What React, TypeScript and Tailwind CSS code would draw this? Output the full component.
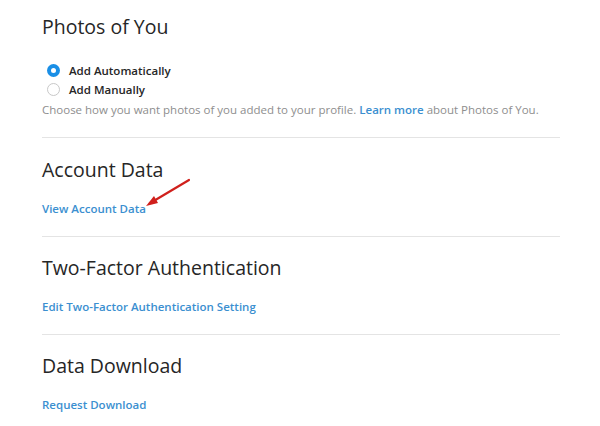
const font = { fontFamily: '"Open Sans", "Noto Sans", sans-serif' };

const sections = [
  { title: 'Account Data', link: 'View Account Data', arrow: true },
  { title: 'Two-Factor Authentication', link: 'Edit Two-Factor Authentication Setting' },
  { title: 'Data Download', link: 'Request Download' },
];

function Radio({ checked, label }: { checked?: boolean; label: string }) {
  return (
    <label className="flex items-center h-[19px] gap-[9px]">
      <span
        className={
          checked
            ? 'w-[13px] h-[13px] rounded-full bg-[#1a8fe6] flex items-center justify-center'
            : 'w-[13px] h-[13px] rounded-full border border-[#c8c8c8] bg-white'
        }
      >
        {checked && <span className="w-[5px] h-[5px] rounded-full bg-white" />}
      </span>
      <span className="text-[11.5px] font-semibold text-[#262626]">{label}</span>
    </label>
  );
}

export default function App() {
  return (
    <div className="w-[600px] h-[426px] bg-white overflow-hidden" style={font}>
      <div className="ml-[42px] w-[518px] pt-[14px]">
        <h2 className="text-[19.5px] leading-[26px] text-[#262626]">Photos of You</h2>
        <div className="mt-[21px] ml-[5px]">
          <Radio checked label="Add Automatically" />
          <Radio label="Add Manually" />
        </div>
        <p className="mt-[2px] text-[11.5px] leading-[18px] text-[#8e8e8e] whitespace-nowrap">
          Choose how you want photos of you added to your profile.{' '}
          <span className="font-semibold text-[#3b8fd0]">Learn more</span> about Photos of You.
        </p>

        {sections.map((s, i) => (
          <div
            key={s.title}
            className={i === 0 ? 'border-t border-[#e4e4e4] mt-[18px] pt-[19px]' : 'border-t border-[#e4e4e4] mt-[18px] pt-[18px]'}
          >
            <h2 className="text-[19.5px] leading-[26px] text-[#262626]">{s.title}</h2>
            <div className="relative mt-[15px] leading-[18px]">
              <a className="text-[11.5px] font-semibold text-[#3b8fd0]">{s.link}</a>
              {s.arrow && (
                <svg className="absolute left-[100px] top-[-21px]" width="60" height="40" viewBox="0 0 60 40">
                  <line x1="47" y1="3" x2="10" y2="25" stroke="#d0201c" strokeWidth="2.2" strokeLinecap="round" />
                  <polygon points="4,29 12,19 16,26" fill="#d0201c" />
                </svg>
              )}
            </div>
          </div>
        ))}
      </div>
    </div>
  );
}
